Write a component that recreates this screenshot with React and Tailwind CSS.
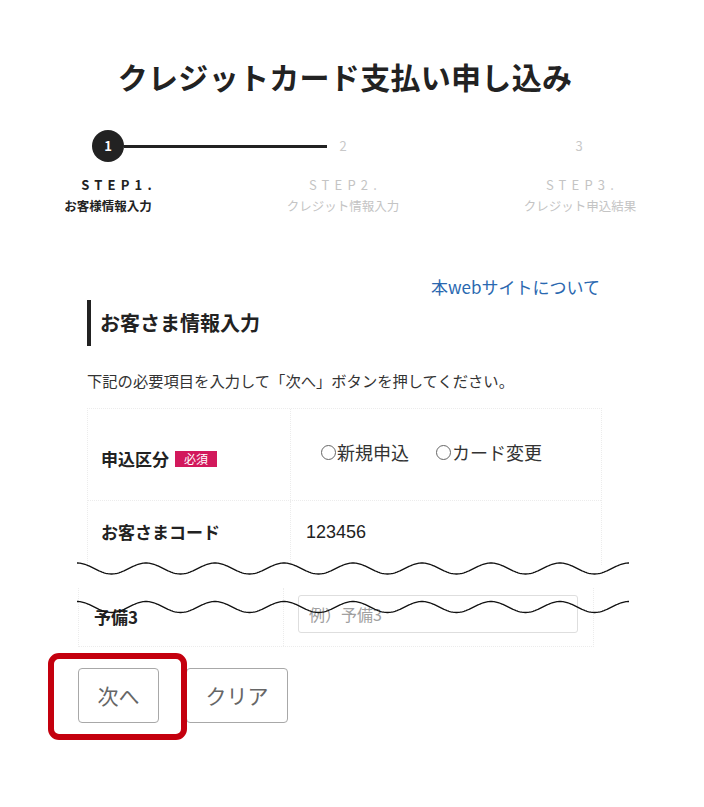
import React from 'react';

const jp = { fontFamily: '"Noto Sans CJK JP", "Noto Sans", sans-serif' };

// sine wave used for the "cut" marks
const wavePath = (cy, x0, x1, period, amp) => {
  let d = '';
  for (let x = x0; x <= x1; x += 1) {
    const y = cy - amp * Math.cos((2 * Math.PI * (x - x0)) / period);
    d += (x === x0 ? 'M' : 'L') + x + ' ' + y.toFixed(2) + ' ';
  }
  return d;
};

const Stepper = () => (
  <div>
    <div className="flex items-center pl-[92px] mt-[34px]">
      <div className="w-8 h-8 rounded-full bg-[#222] text-white text-[13px] font-bold flex items-center justify-center">1</div>
      <div className="w-[203px] h-[3px] bg-[#222]" />
      <div className="w-8 text-center text-[13px] text-[#c8c8c8]">2</div>
      <div className="w-[204px]" />
      <div className="w-8 text-center text-[13px] text-[#c8c8c8]">3</div>
    </div>
    <div className="flex pl-[48px] mt-[15px]">
      <div className="w-[130px] text-center">
        <div className="text-[13px] leading-4 font-bold tracking-[0.4em] text-[#222] pl-[12px]">STEP1.</div>
        <div className="text-[12.5px] leading-4 font-bold text-[#222] mt-[5px] -ml-[10px]">お客様情報入力</div>
      </div>
      <div className="w-[130px] text-center ml-[100px]">
        <div className="text-[13px] leading-4 tracking-[0.4em] text-[#c4c4c4] pl-[5px]">STEP2.</div>
        <div className="text-[12.5px] leading-4 text-[#c4c4c4] mt-[5px]">クレジット情報入力</div>
      </div>
      <div className="w-[130px] text-center ml-[107px]">
        <div className="text-[13px] leading-4 tracking-[0.4em] text-[#c4c4c4] pl-[5px]">STEP3.</div>
        <div className="text-[12.5px] leading-4 text-[#c4c4c4] mt-[5px]">クレジット申込結果</div>
      </div>
    </div>
  </div>
);

const Radio = ({ label }) => (
  <label className="flex items-center">
    <span className="w-[15px] h-[15px] rounded-full border border-[#666] mr-[1px]" />
    <span className="text-[18px] text-[#333]">{label}</span>
  </label>
);

export default function App() {
  return (
    <div className="relative w-[704px] h-[807px] bg-white text-[#222] overflow-hidden" style={jp}>
      <h1 className="mt-[56px] text-center text-[30px] leading-[40px] font-bold tracking-[0.01em] pr-[14px]">
        クレジットカード支払い申し込み
      </h1>

      <Stepper />

      <div className="mt-[61px] w-[600px] text-right">
        <a className="text-[17px] leading-6 text-[#2a68b0]">本webサイトについて</a>
      </div>

      <div className="ml-[87px] mt-[1px] h-[46px] border-l-4 border-[#222] pl-[9px] flex items-center">
        <h2 className="text-[20px] font-bold">お客さま情報入力</h2>
      </div>

      <p className="ml-[87px] mt-[23px] text-[15.3px] leading-[22px] text-[#333]">
        下記の必要項目を入力して「次へ」ボタンを押してください。
      </p>

      {/* upper part of the table */}
      <div className="ml-[87px] mt-[17px] w-[515px] h-[157px] border border-b-0 border-dotted border-[#ececec]">
        <div className="flex h-[92px] border-b border-dotted border-[#ececec]">
          <div className="w-[203px] border-r border-dotted border-[#ececec] flex items-center pl-[13px] pt-[8px]">
            <span className="text-[17px] font-bold">申込区分</span>
            <span className="ml-[6px] w-[42px] h-[16px] bg-[#d2195c] text-white text-[12px] leading-[16px] text-center">必須</span>
          </div>
          <div className="flex items-center gap-[27px] pl-[30px] pb-[4px]">
            <Radio label="新規申込" />
            <Radio label="カード変更" />
          </div>
        </div>
        <div className="flex h-[64px]">
          <div className="w-[203px] border-r border-dotted border-[#ececec] pl-[13px] pt-[19px]">
            <span className="text-[17px] leading-6 font-bold">お客さまコード</span>
          </div>
          <div className="pl-[15px] pt-[19px] text-[18px] leading-6 text-[#222]" style={{ fontFamily: '"Liberation Sans", sans-serif' }}>
            123456
          </div>
        </div>
      </div>

      {/* lower part of the table, after the cut */}
      <div className="ml-[78px] mt-[23px] w-[516px] h-[59px] border border-t-0 border-dotted border-[#ececec] flex">
        <div className="w-[205px] border-r border-dotted border-[#ececec] pl-[15px] pt-[17px]">
          <span className="text-[17px] leading-6 font-bold">予備3</span>
        </div>
        <div className="pl-[14px] pt-[7px]">
          <div className="w-[280px] h-[38px] border border-[#dedede] rounded-[3px] flex items-center pl-[10px] text-[16px] text-[#a0a0a0]">
            例）予備3
          </div>
        </div>
      </div>

      {/* cut marks */}
      <svg className="absolute left-0 top-[555px]" width="704" height="65" viewBox="0 555 704 65">
        <path d={wavePath(568.5, 77, 629, 69, 5.5)} fill="none" stroke="#111" strokeWidth="1.3" />
        <path d={wavePath(607, 77, 629, 69, 5.5)} fill="none" stroke="#111" strokeWidth="1.3" />
      </svg>

      <div className="ml-[78px] mt-[21px] flex gap-[27px]">
        <div className="relative">
          <button className="w-[81px] h-[55px] border border-[#a8a8a8] rounded-[4px] text-[21px] text-[#666]">次へ</button>
          <div className="absolute -left-[30px] -top-[15px] w-[139px] h-[87px] border-[6px] border-[#c4000e] rounded-[11px]" />
        </div>
        <button className="w-[102px] h-[55px] border border-[#a8a8a8] rounded-[4px] text-[21px] text-[#666]">クリア</button>
      </div>
    </div>
  );
}
